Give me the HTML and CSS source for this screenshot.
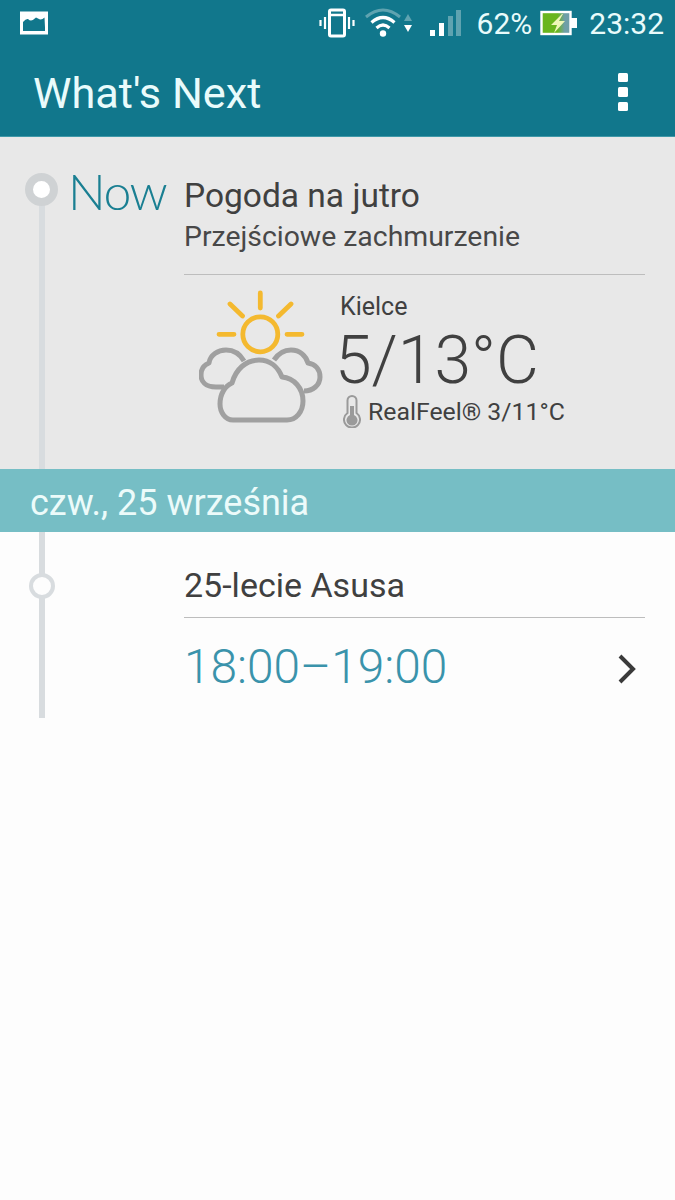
FILE: index.html
```html
<!DOCTYPE html>
<html lang="en">
<head>
    <meta charset="UTF-8">
    <meta name="viewport" content="width=device-width, initial-scale=1.0">
    <title>What's Next</title>
    <link rel="stylesheet" href="styles.css">
</head>
<body>
    <header class="app-header">
        <div class="status-bar">
            <svg class="icon-picture" width="30" height="24" viewBox="0 0 30 24">
                <path fill="#fff" fill-rule="evenodd" d="M1 0.500h28v23h-28z M4 16.500v3.500h22v-3.500l-0.500-10q-2.500 2.500-5 1.800l-3.500-1.800q-2.500 2.500-5 3q-1.500 0-3-1.500q-2 -0.500-5 3z"/>
            </svg>
            <div class="status-right">
                <svg width="36" height="30" viewBox="0 0 36 30" fill="none" stroke="#fff">
                    <rect x="10.500" y="2" width="15" height="26" rx="1.500" stroke-width="3"/>
                    <path d="M11 7h14" stroke-width="2.500"/>
                    <path d="M6 9v12M1.500 12v6M30 9v12M34.500 12v6" stroke-width="2.200"/>
                </svg>
                <svg class="icon-wifi" width="50" height="32" viewBox="0 0 50 32" fill="none">
                    <path d="M1 10q17-14 34 0" stroke="#5fa3b0" stroke-width="3"/>
                    <path d="M6.500 15.500q11.500-10 23 0" stroke="#fff" stroke-width="3.200"/>
                    <path d="M11.500 21q6.500-6 13 0" stroke="#fff" stroke-width="3.200"/>
                    <circle cx="18" cy="26.500" r="3.200" fill="#fff"/>
                    <path d="M39 14l4-7 4 7z" fill="#5fa3b0"/>
                    <path d="M39 18h8l-4 7z" fill="#fff"/>
                </svg>
                <svg class="icon-signal" width="32" height="28" viewBox="0 0 32 28">
                    <rect x="0" y="21" width="5" height="6" fill="#fff"/>
                    <rect x="9" y="14" width="5" height="13" fill="#fff"/>
                    <rect x="18" y="7" width="5" height="20" fill="#5fa3b0"/>
                    <rect x="26" y="1" width="5" height="26" fill="#5fa3b0"/>
                </svg>
                <span class="battery-level">62%</span>
                <svg class="icon-battery" width="38" height="26" viewBox="0 0 38 26">
                    <defs>
                        <linearGradient id="charge">
                            <stop offset="0.550" stop-color="#69b51e"/>
                            <stop offset="0.800" stop-color="#6f9fa8"/>
                        </linearGradient>
                    </defs>
                    <rect x="1.500" y="2" width="29" height="22" fill="url(#charge)" stroke="#fff" stroke-width="2.400"/>
                    <rect x="31" y="8" width="6" height="10" fill="#fff"/>
                    <path d="M22 4l-11 11h6l-3 8 11-12h-6l4-7z" fill="#eef7b8"/>
                </svg>
                <span class="clock">23:32</span>
            </div>
        </div>
        <div class="toolbar">
            <h1>What's Next</h1>
            <div class="menu-dots"><i></i><i></i><i></i></div>
        </div>
    </header>

    <section class="timeline now-section">
        <div class="rail">
            <span class="dot-now"></span>
            <span class="now-label">Now</span>
        </div>
        <div class="card">
            <div class="card-title">Pogoda na jutro</div>
            <div class="card-subtitle">Przejściowe zachmurzenie</div>
            <div class="weather">
                <svg class="weather-icon" width="126" height="136" viewBox="0 0 126 136" fill="none">
                    <g stroke="#f4b92f" stroke-linecap="round" stroke-width="4.800">
                        <circle cx="61.300" cy="46.300" r="17.500"/>
                        <path d="M61.300 5v15M31 16l12.500 12M92 16l-12.500 12M20 46.300h15M88 46.300h15"/>
                    </g>
                    <g stroke="#a0a0a0" stroke-width="5" stroke-linejoin="round">
                        <path d="M25 99H17C6 99 2 93 2 87C2 81 5 77 10 75C11 67 19 62 27 62C35 62 41 66 45 73"/>
                        <path d="M75 72C79 66 85 62 92 62C101 62 107 68 109 75C116 76 121 81 121 89C121 97 114 103 105 103"/>
                        <path d="M34 132C26 132 21 124 21 116C21 106 26 98 33 95C37 81 47 72 60 72C71 72 79 79 83 89C95 90 104 100 104 113C104 124 97 132 88 132Z" fill="#e8e8e8"/>
                    </g>
                </svg>
                <div class="weather-info">
                    <div class="city">Kielce</div>
                    <div class="temp">5/13°C</div>
                    <div class="realfeel">
                        <svg width="18" height="34" viewBox="0 0 18 34" fill="none">
                            <path d="M4.500 19V6.500a4.500 4.500 0 0 1 9 0V19a8 8 0 1 1-9 0z" stroke="#9a9a9a" stroke-width="2"/>
                            <path d="M7 12h4v9a5.500 5.500 0 1 1-4 0z" fill="#9a9a9a"/>
                        </svg>
                        <span>RealFeel® 3/11°C</span>
                    </div>
                </div>
            </div>
        </div>
    </section>

    <div class="date-band">czw., 25 września</div>

    <section class="timeline event-section">
        <div class="rail">
            <span class="dot-event"></span>
        </div>
        <div class="card">
            <div class="card-title event-title">25-lecie Asusa</div>
            <div class="event-row">
                <span class="event-time">18:00–19:00</span>
                <svg class="chevron" width="20" height="32" viewBox="0 0 20 32" fill="none">
                    <path d="M3 3l13 13-13 13" stroke="#3a3a3a" stroke-width="4"/>
                </svg>
            </div>
        </div>
    </section>
</body>
</html>
```

FILE: styles.css
```css
body {
    margin: 0;
    min-height: 1200px;
    font-family: Roboto, "Liberation Sans", sans-serif;
    background-color: #fdfdfd;
    color: #404040;
}

.app-header {
    height: 137px;
    background-color: #11778c;
    color: #e9fbfb;
    box-sizing: border-box;
    border-bottom: 1px solid #3f98a8;
}

.status-bar {
    height: 46px;
    display: flex;
    align-items: center;
    justify-content: space-between;
    padding: 0 11px 0 19px;
}

.status-right {
    display: flex;
    align-items: center;
    font-size: 30px;
}

.icon-wifi {
    margin-left: 10px;
}

.icon-signal {
    margin-left: 15px;
}

.battery-level {
    margin-left: 15px;
}

.icon-battery {
    margin-left: 8px;
}

.clock {
    margin-left: 11px;
}

.toolbar {
    height: 90px;
    display: flex;
    align-items: center;
    justify-content: space-between;
    padding: 0 47px 0 33px;
}

.toolbar h1 {
    margin: 4px 0 0;
    font-size: 43.300px;
    font-weight: 400;
}

.menu-dots {
    display: flex;
    flex-direction: column;
    gap: 5px;
    margin-top: 2px;
}

.menu-dots i {
    width: 10px;
    height: 9.500px;
    border-radius: 1.500px;
    background-color: #fff;
}

.timeline {
    display: flex;
    position: relative;
}

/* vertical line running through the dots */
.timeline::before {
    content: "";
    position: absolute;
    left: 39px;
    width: 6px;
    top: 0;
    bottom: 0;
    background-color: #d8dcdf;
}

.rail {
    width: 184px;
    flex-shrink: 0;
    position: relative;
}

.now-section {
    height: 332px;
    background-color: #e8e8e8;
}

.now-section::before {
    top: 60px;
}

.dot-now {
    position: absolute;
    left: 25px;
    top: 36px;
    width: 17px;
    height: 17px;
    border: 8.500px solid #cfd2d4;
    border-radius: 50%;
    background-color: #fff;
}

.now-label {
    position: absolute;
    left: 68px;
    top: 24px;
    font-family: Lato, "Open Sans", sans-serif;
    font-weight: 300;
    font-size: 50px;
    letter-spacing: -1.500px;
    color: #1a7f92;
}

.card {
    flex: 1;
    margin-right: 30px;
}

.card-title {
    font-size: 33.500px;
    line-height: 40px;
    margin-top: 39px;
}

.card-subtitle {
    font-size: 28.400px;
    line-height: 36px;
    margin-top: 3px;
    padding-bottom: 19px;
    border-bottom: 1px solid #bdbdbd;
    color: #484848;
}

.weather {
    display: flex;
    margin-top: 13px;
    padding-left: 15px;
}

.weather-icon {
    flex-shrink: 0;
}

.weather-info {
    margin-left: 15px;
}

.city {
    font-size: 25px;
    line-height: 30px;
    margin-top: 4px;
}

.temp {
    font-size: 66px;
    font-weight: 300;
    line-height: 70px;
    margin-top: 4px;
    margin-left: -5px;
}

.realfeel {
    display: flex;
    align-items: center;
    gap: 7px;
    font-size: 24.800px;
    margin-top: -2px;
    margin-left: 3px;
}

.date-band {
    height: 63px;
    line-height: 68px;
    padding-left: 30px;
    font-size: 36px;
    background-color: #76bec5;
    color: #ecfbfa;
}

.event-section {
    height: 186px;
}

.dot-event {
    position: absolute;
    left: 29px;
    top: 41px;
    width: 18px;
    height: 18px;
    border: 4px solid #d8dcdf;
    border-radius: 50%;
    background-color: #fdfdfd;
}

.event-title {
    font-size: 34px;
    margin-top: 33px;
    padding-bottom: 12px;
    border-bottom: 1px solid #bdbdbd;
}

.event-row {
    display: flex;
    align-items: center;
    justify-content: space-between;
    padding-right: 8px;
    margin-top: 21px;
}

.event-time {
    font-size: 47.800px;
    font-weight: 300;
    color: #3a93ab;
}

.chevron {
    margin-top: 3px;
}
```
